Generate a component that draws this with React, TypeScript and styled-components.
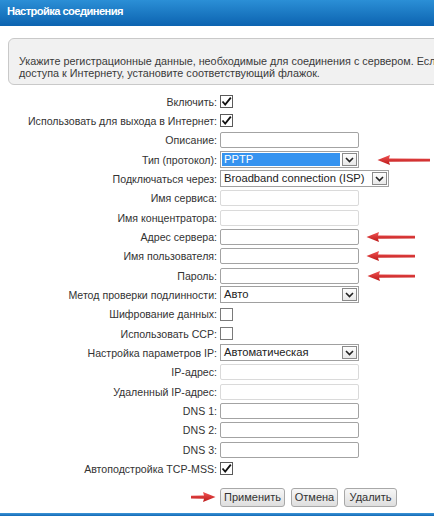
import React from "react";
import styled, { createGlobalStyle } from "styled-components";

const Global = createGlobalStyle`
  html, body { margin: 0; padding: 0; background: #fff; }
  body { width: 434px; height: 516px; overflow: hidden; font-family: "Liberation Sans", Arial, sans-serif; }
  #root { width: 434px; height: 516px; }
`;

const Page = styled.div`
  width: 434px;
  height: 516px;
  display: flex;
  flex-direction: column;
  overflow: hidden;
  position: relative;
`;

const Header = styled.div`
  height: 26px;
  flex: none;
  background: linear-gradient(#2b8fd6, #0c63b0);
  color: #fff;
  font-weight: bold;
  font-size: 11.2px;
  letter-spacing: -0.6px;
  line-height: 22px;
  padding-left: 7px;
  white-space: nowrap;
`;

const InfoBox = styled.div`
  margin: 12px 0 0 8px;
  width: 560px;
  height: 47px;
  box-sizing: border-box;
  flex: none;
  border: 1px solid #c9c9c9;
  border-radius: 6px;
  background: #f1f1f1;
  color: #3a3a3a;
  font-size: 10.8px;
  line-height: 12px;
  padding: 16px 0 0 10px;
  white-space: nowrap;
`;

const Form = styled.div`
  margin-top: 7px;
  display: grid;
  grid-template-columns: 217px 1fr;
  column-gap: 3px;
  grid-auto-rows: 19.33px;
  align-items: center;
  font-size: 10.6px;
  color: #333;
`;

const Label = styled.div`
  text-align: right;
  white-space: nowrap;
`;

const Cell = styled.div`
  display: flex;
  align-items: center;
  height: 100%;
`;

const TextBox = styled.div<{ $disabled?: boolean }>`
  width: 139px;
  height: 16px;
  box-sizing: border-box;
  background: #fff;
  border: 1px solid ${(p) => (p.$disabled ? "#dadada" : "#a3a3a3")};
  border-radius: 2px;
  flex: none;
`;

const Box = styled.span<{ $checked?: boolean }>`
  width: 13px;
  height: 13px;
  box-sizing: border-box;
  border: 1px solid ${(p) => (p.$checked ? "#5a5a5a" : "#7a7a7a")};
  background: #fff;
  display: inline-flex;
  align-items: center;
  justify-content: center;
  flex: none;
`;

const SelectBox = styled.div<{ $w: number }>`
  width: ${(p) => p.$w}px;
  height: 17px;
  box-sizing: border-box;
  border: 1px solid #a0a0a0;
  background: #fff;
  display: flex;
  align-items: center;
  padding: 1px;
  flex: none;
`;

const SelectValue = styled.div<{ $hl?: boolean }>`
  flex: 1;
  height: 13px;
  line-height: 13px;
  padding-left: 2px;
  font-size: 11.2px;
  color: ${(p) => (p.$hl ? "#fff" : "#222")};
  background: ${(p) => (p.$hl ? "#3593f0" : "transparent")};
  white-space: nowrap;
  overflow: hidden;
`;

const DropBtn = styled.div`
  width: 15px;
  height: 13px;
  box-sizing: border-box;
  margin-left: 2px;
  border: 1px solid #8a8a8a;
  background: linear-gradient(#fdfdfd, #e9e9e9);
  display: flex;
  align-items: center;
  justify-content: center;
  flex: none;
`;

const ArrowWrap = styled.span<{ $ml: number }>`
  margin-left: ${(p) => p.$ml}px;
  display: inline-flex;
  flex: none;
`;

const ButtonRow = styled.div`
  display: grid;
  grid-template-columns: 217px 1fr;
  column-gap: 3px;
  margin-top: 9px;
  align-items: center;
`;

const Buttons = styled.div`
  display: flex;
  gap: 6px;
`;

const LeftArrowCell = styled.div`
  display: flex;
  justify-content: flex-end;
  padding-right: 1px;
`;

const Button = styled.button<{ $w: number }>`
  width: ${(p) => p.$w}px;
  height: 19px;
  padding: 0;
  border: 1px solid #a8a8a8;
  border-radius: 3px;
  background: linear-gradient(#f7f7f7, #dedede);
  font-family: "Liberation Sans", Arial, sans-serif;
  font-size: 11px;
  color: #333;
  line-height: 17px;
`;

const BottomBar = styled.div`
  position: absolute;
  left: 0;
  right: 0;
  bottom: 0;
  height: 3px;
  background: linear-gradient(#3d96d8, #1268b5);
`;

const Check = () => (
  <svg width="11" height="11" viewBox="0 0 11 11">
    <path d="M1.5 5.5 L4.2 8.5 L9.8 1.6" fill="none" stroke="#111" strokeWidth="1.8" strokeLinejoin="miter" />
  </svg>
);

const Chevron = () => (
  <svg width="9" height="6" viewBox="0 0 9 6">
    <path d="M1 1 L4.5 4.5 L8 1" fill="none" stroke="#222" strokeWidth="1.6" />
  </svg>
);

const RedArrow = ({ w, dir = "left" }: { w: number; dir?: "left" | "right" }) => (
  <svg width={w} height="12" viewBox={`0 0 ${w} 12`} style={dir === "right" ? { transform: "scaleX(-1)" } : undefined}>
    <defs>
      <linearGradient id={`rg${w}${dir}`} x1="0" y1="0" x2="0" y2="1">
        <stop offset="0" stopColor="#f04a4a" />
        <stop offset="1" stopColor="#b80c0c" />
      </linearGradient>
    </defs>
    <path
      d={`M0.5 6 L13 1 L12 4.4 L${w - 1} 4.8 L${w - 1} 7.6 L12 7.8 L13 11 Z`}
      fill={`url(#rg${w}${dir})`}
      opacity="0.95"
    />
  </svg>
);

type Ctrl =
  | { kind: "check"; checked: boolean }
  | { kind: "text"; disabled?: boolean }
  | { kind: "select"; value: string; w: number; hl?: boolean };

const rows: { label: string; ctrl: Ctrl; arrow?: { ml: number; w: number } }[] = [
  { label: "Включить:", ctrl: { kind: "check", checked: true } },
  { label: "Использовать для выхода в Интернет:", ctrl: { kind: "check", checked: true } },
  { label: "Описание:", ctrl: { kind: "text" } },
  { label: "Тип (протокол):", ctrl: { kind: "select", value: "PPTP", w: 139, hl: true }, arrow: { ml: 18, w: 54 } },
  { label: "Подключаться через:", ctrl: { kind: "select", value: "Broadband connection (ISP)", w: 169 } },
  { label: "Имя сервиса:", ctrl: { kind: "text", disabled: true } },
  { label: "Имя концентратора:", ctrl: { kind: "text", disabled: true } },
  { label: "Адрес сервера:", ctrl: { kind: "text" }, arrow: { ml: 7, w: 50 } },
  { label: "Имя пользователя:", ctrl: { kind: "text" }, arrow: { ml: 7, w: 50 } },
  { label: "Пароль:", ctrl: { kind: "text" }, arrow: { ml: 8, w: 49 } },
  { label: "Метод проверки подлинности:", ctrl: { kind: "select", value: "Авто", w: 139 } },
  { label: "Шифрование данных:", ctrl: { kind: "check", checked: false } },
  { label: "Использовать CCP:", ctrl: { kind: "check", checked: false } },
  { label: "Настройка параметров IP:", ctrl: { kind: "select", value: "Автоматическая", w: 139 } },
  { label: "IP-адрес:", ctrl: { kind: "text", disabled: true } },
  { label: "Удаленный IP-адрес:", ctrl: { kind: "text", disabled: true } },
  { label: "DNS 1:", ctrl: { kind: "text" } },
  { label: "DNS 2:", ctrl: { kind: "text" } },
  { label: "DNS 3:", ctrl: { kind: "text" } },
  { label: "Автоподстройка TCP-MSS:", ctrl: { kind: "check", checked: true } },
];

const Control = ({ c }: { c: Ctrl }) => {
  if (c.kind === "check") return <Box $checked={c.checked}>{c.checked && <Check />}</Box>;
  if (c.kind === "text") return <TextBox $disabled={c.disabled} />;
  return (
    <SelectBox $w={c.w}>
      <SelectValue $hl={c.hl}>{c.value}</SelectValue>
      <DropBtn>
        <Chevron />
      </DropBtn>
    </SelectBox>
  );
};

export default function App() {
  return (
    <Page>
      <Global />
      <Header>Настройка соединения</Header>
      <InfoBox>
        Укажите регистрационные данные, необходимые для соединения с сервером. Если данное соединение используется для
        <br />
        доступа к Интернету, установите соответствующий флажок.
      </InfoBox>
      <Form>
        {rows.map((r) => (
          <React.Fragment key={r.label}>
            <Label>{r.label}</Label>
            <Cell>
              <Control c={r.ctrl} />
              {r.arrow && (
                <ArrowWrap $ml={r.arrow.ml}>
                  <RedArrow w={r.arrow.w} />
                </ArrowWrap>
              )}
            </Cell>
          </React.Fragment>
        ))}
      </Form>
      <ButtonRow>
        <LeftArrowCell>
          <RedArrow w={26} dir="right" />
        </LeftArrowCell>
        <Buttons>
          <Button $w={65}>Применить</Button>
          <Button $w={47}>Отмена</Button>
          <Button $w={53}>Удалить</Button>
        </Buttons>
      </ButtonRow>
      <BottomBar />
    </Page>
  );
}
